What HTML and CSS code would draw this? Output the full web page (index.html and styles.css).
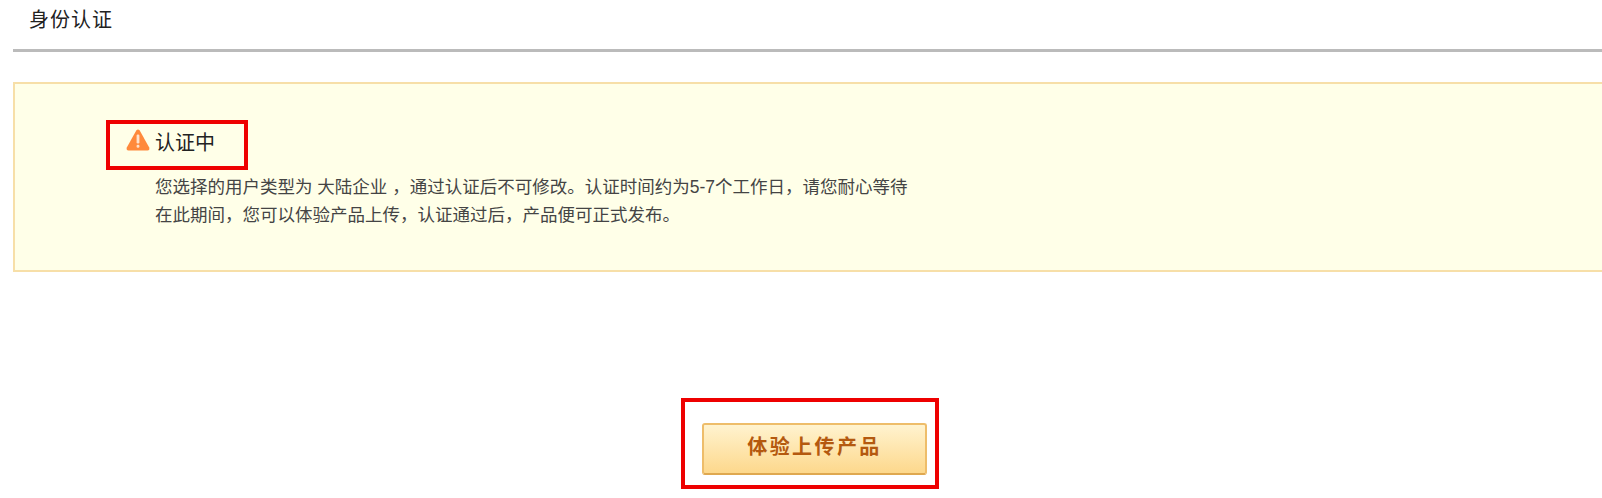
FILE: index.html
```html
<!DOCTYPE html>
<html lang="zh-CN">
<head>
  <meta charset="UTF-8" />
  <title>身份认证</title>
  <link rel="stylesheet" href="styles.css">
</head>
<body>
  <div class="container">
    <h2 class="page-title">身份认证</h2>

    <div class="notice">
      <div class="mark notice-title">
        <svg class="warn-icon" width="24" height="24" viewBox="0 0 24 24">
          <path d="M10.4 2.2 Q12 0.6 13.6 2.2 L23.2 19.6 Q24 22.5 21.5 22.5 H2.5 Q0 22.5 0.8 19.6 Z" fill="#ff8a3c" />
          <rect x="10.6" y="6.5" width="2.8" height="9" rx="1.2" fill="#ffe3cd" />
          <rect x="10.6" y="16.8" width="2.8" height="2.9" rx="1.2" fill="#ffe3cd" />
        </svg>
        <span>认证中</span>
      </div>
      <p class="notice-text first">您选择的用户类型为 大陆企业 ，通过认证后不可修改。认证时间约为5-7个工作日，请您耐心等待</p>
      <p class="notice-text">在此期间，您可以体验产品上传，认证通过后，产品便可正式发布。</p>
    </div>

    <div class="actions">
      <div class="mark action-mark">
        <button class="upload-btn">体验上传产品</button>
      </div>
    </div>
  </div>
</body>
</html>
```

FILE: styles.css
```css
html, body {
  margin: 0;
  padding: 0;
  overflow: hidden;
}
body {
  background: #fff;
  font-family: "Liberation Sans", "Noto Sans CJK SC", sans-serif;
  color: #333;
}
.container {
  padding-left: 13px;
}
.page-title {
  margin: 0;
  height: 49px;
  padding-left: 16px;
  line-height: 41px;
  font-size: 20px;
  letter-spacing: 1px;
  font-weight: normal;
  color: #222;
  border-bottom: 3px solid #bbb;
}
.notice {
  box-sizing: border-box;
  margin-top: 30px;
  height: 190px;
  padding: 36px 0 0 91px;
  background: #ffffe8;
  border: 2px solid #f7dfa8;
  border-right: none;
}
.mark {
  border: 4px solid #ee0000;
}
.notice-title {
  box-sizing: border-box;
  display: flex;
  align-items: center;
  width: 142px;
  height: 50px;
  padding: 0 0 8px 16px;
  font-size: 20px;
  color: #222;
}
.warn-icon {
  margin: -2px 5px 0 0;
}
.notice-text {
  margin: 0 0 0 49px;
  font-size: 17.5px;
  line-height: 28px;
  color: #444;
  white-space: nowrap;
}
.notice-text.first {
  margin-top: 3px;
}
.actions {
  margin-top: 126px;
  padding-left: 668px;
}
.action-mark {
  box-sizing: border-box;
  width: 258px;
  height: 91px;
  padding: 21px 0 0 17px;
}
.upload-btn {
  width: 225px;
  height: 52px;
  padding: 0 0 8px;
  background: linear-gradient(#fff3cf, #fdd88c);
  border: 2px solid #eebd6a;
  border-bottom-color: #dfa850;
  border-radius: 3px;
  color: #b4590f;
  font-family: "Liberation Sans", "Noto Sans CJK SC", sans-serif;
  font-size: 20px;
  font-weight: bold;
  letter-spacing: 2.4px;
  cursor: pointer;
}
```
